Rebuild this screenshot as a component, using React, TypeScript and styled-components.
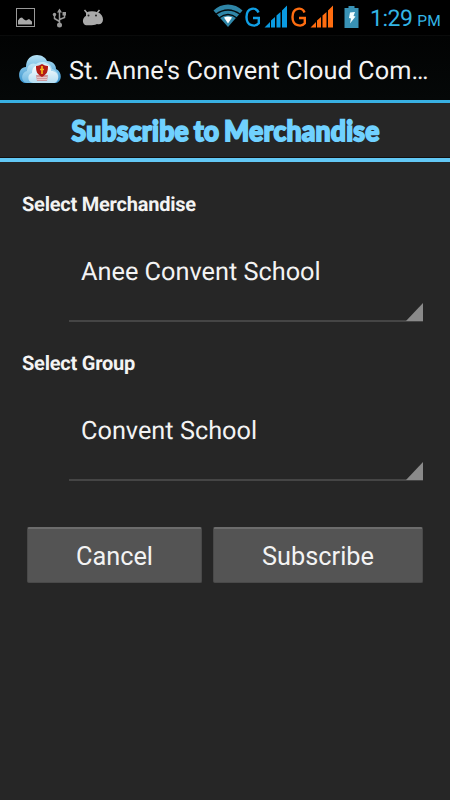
import React from "react";
import styled, { createGlobalStyle } from "styled-components";

const GlobalStyle = createGlobalStyle`
  * { box-sizing: border-box; }
  body { margin: 0; background: #262626; }
`;

const Screen = styled.div`
  width: 450px;
  height: 800px;
  display: flex;
  flex-direction: column;
  overflow: hidden;
  background: #262626;
  color: #f3f3f3;
  font-family: Roboto, "Liberation Sans", sans-serif;
  text-rendering: geometricPrecision;
`;

const StatusBar = styled.header`
  height: 36px;
  flex: none;
  display: flex;
  justify-content: space-between;
  background: #000;
  border-bottom: 1px solid #0a0b0b;
`;

const StatusIcons = styled.svg`
  display: block;
  flex: none;
`;

const StatusGroup = styled.div`
  display: flex;
`;

const Clock = styled.div`
  width: 80px;
  padding-top: 5px;
  color: #33b5e5;
  font-size: 23px;
  line-height: 27px;
  letter-spacing: -0.5px;
  white-space: nowrap;
`;

const Meridiem = styled.span`
  margin-left: 5px;
  font-size: 15.5px;
  letter-spacing: 0;
`;

const ActionBar = styled.div`
  height: 67px;
  flex: none;
  display: flex;
  align-items: flex-start;
  padding: 18px 0 0 18px;
  background: linear-gradient(#020303, #050808);
  border-bottom: 3px solid #38b0e2;
`;

const AppTitle = styled.h1`
  margin: 2px 0 0 7px;
  font-size: 25.3px;
  font-weight: 400;
  line-height: 32px;
  letter-spacing: 0.08px;
  white-space: nowrap;
`;

const Banner = styled.h2`
  height: 59px;
  flex: none;
  margin: 0;
  display: flex;
  justify-content: center;
  padding: 11px 0 0 1px;
  border-bottom: 4px solid #62c8f5;
  box-shadow: inset 0 -1px #111;
  color: #70d1ff;
  font-family: Lato, sans-serif;
  font-size: 28.5px;
  font-weight: 900;
  line-height: 34px;
  letter-spacing: 0.25px;
  word-spacing: -2px;
  white-space: nowrap;
`;

const BannerText = styled.span`
  transform: scaleX(0.93);
  -webkit-text-stroke: 1.8px #70d1ff;
`;

const Form = styled.main`
  display: flex;
  flex-direction: column;
  padding: 0 27px 0 22px;
`;

const Field = styled.section<{ $top: number }>`
  margin-top: ${(p) => p.$top}px;
`;

const Label = styled.div`
  height: 26px;
  font-size: 20px;
  font-weight: 700;
  line-height: 26px;
  letter-spacing: -0.23px;
  white-space: nowrap;
`;

const Spinner = styled.div`
  height: 105px;
  margin-left: 47px;
  display: flex;
  justify-content: space-between;
  align-items: flex-end;
  border-bottom: 2px solid #454545;
`;

const Value = styled.div`
  height: 63px;
  padding-left: 12px;
  font-size: 25.3px;
  line-height: 32px;
  white-space: nowrap;
`;

const Corner = styled.svg`
  display: block;
  margin-bottom: -1px;
`;

const Buttons = styled.div`
  display: grid;
  grid-template-columns: 175px 210px;
  gap: 11px;
  margin: 46px 0 0 5px;
`;

const Button = styled.button`
  height: 56px;
  padding: 3px 0 0;
  border: 1px solid #494949;
  border-top: 2px solid #6c6c6c;
  border-radius: 2px;
  background: #545454;
  color: #f3f3f3;
  font-family: inherit;
  font-size: 25.3px;
  line-height: 32px;
`;

const LeftIcons = () => (
  <StatusIcons width="110" height="35" viewBox="0 0 110 35">
    <rect x="16.5" y="8.500" width="18" height="18" fill="none" stroke="#999" />
    <path d="M18 24.500v-4l2-2.500 2-.5 2 2 2 1 3-1.500 3 2.500v3z" fill="#aaa" />
    <g stroke="#999" strokeWidth="1.500" fill="none">
      <path d="M59.500 25V10M59.500 21.500l-5-3V14M59.500 19.500l5-2V14" />
    </g>
    <path d="M57 12.500 59.500 8.500l2.500 4zM62.500 12h3.500v3.500h-3.500z" fill="#999" />
    <circle cx="54.500" cy="14.500" r="1.700" fill="#999" />
    <circle cx="59.500" cy="25" r="2.500" fill="#999" />
    <path d="M86 12.500q6-2.500 12 0c3 1 5 4 5 7 0 4-3 5.500-6 4.500-3 1.300-6 1.500-9 1.300-3.500.5-5.500-2.300-5-5.300.5-2 1.500-3.500 3-4z" fill="#aaa" />
    <path d="m87 13-2.500-3M97 13l2.500-3" stroke="#aaa" strokeWidth="1.500" />
    <circle cx="88.500" cy="15.500" r="1" fill="#222" />
    <circle cx="96" cy="15.500" r="1" fill="#222" />
  </StatusIcons>
);

const Bars = ({ x, color }: { x: number; color: string }) => (
  <path
    transform={`translate(${x} 0)`}
    fill={color}
    d="M0 27.500 5.500 22v5.500zM6.500 27.500v-7L10.500 17v10.500zM12 27.500v-12l4-3.500v15.500zM17.500 27.500V10.500L22.500 5.500V27.500z"
  />
);

const RadioIcons = () => (
  <StatusIcons width="160" height="35" viewBox="210 0 160 35">
    <path d="M213.500 10.500a20.500 20.500 0 0 1 29 0L228 27z" fill="#2f86a8" />
    <g fill="none" stroke="#050b0e" strokeWidth="1.300">
      <path d="M215.500 14.500q12.500-9 25 0M219 18q9-7 18 0" />
    </g>
    <path d="M224 17.500q4-2 8 0l-4 6z" fill="#fff" />
    <g fill="none" strokeWidth="2.400">
      <path d="M258.500 12.500C256.500 6.800 246.500 7 246.500 17S256 26.800 258.800 23.300v-5.300H253" stroke="#10a0e6" />
      <path d="M304.500 12.500C302.500 6.800 292.500 7 292.500 17S302 26.800 304.800 23.300v-5.300H299" stroke="#ff6d10" />
    </g>
    <Bars x={264.500} color="#0a9be2" />
    <Bars x={310.500} color="#ff6d10" />
    <path d="M344.500 8h4V6h6v2h4v20h-14z" fill="#3992b5" />
    <path d="m350 12.500 5-.5-1.500 4 2 .5-5.500 7 1-5-2-.5z" fill="#f4ffff" />
  </StatusIcons>
);

const CloudLogo = () => (
  <StatusIcons width="44" height="34" viewBox="18 54 44 34">
    <defs>
      <linearGradient id="cloudBack" x1="0" y1="0" x2="0" y2="1">
        <stop stopColor="#b5e2f5" />
        <stop offset="1" stopColor="#3793ce" />
      </linearGradient>
      <linearGradient id="cloudMiddle" x1="0" y1="0" x2="0" y2="1">
        <stop stopColor="#c9ebf9" />
        <stop offset="1" stopColor="#6db7e1" />
      </linearGradient>
      <linearGradient id="cloudFront" x1="0" y1="0" x2="0" y2="1">
        <stop stopColor="#ffffff" />
        <stop offset="1" stopColor="#b5def2" />
      </linearGradient>
    </defs>
    <path d="M25 83c-8-1-8-16 1-16 0-8 5-12 11-12 5 0 9 3 10 6 6 0 9 4 9 8 7 3 6 14-1 14z" fill="url(#cloudBack)" />
    <path d="M27 83c-7-1-6-11 0-12 0-6 5-9 9-7 5-4 15-2 16 5 9 2 8 13 1 14z" fill="url(#cloudMiddle)" />
    <path d="M33 83c-6-1-6-9-1-10 0-6 4-9 8-7 5-3 11-1 11 5 9 0 9 11 3 12z" fill="url(#cloudFront)" />
    <path d="M36 75h12l-1 6H37z" fill="#d0989c" />
    <path d="M37 77.500h10M37 79.500h10" stroke="#efdadd" strokeWidth=".7" />
    <path d="M36 66q3 0 6-2 3 2 6 2c0 6-1 8-6 11-5-3-6-5-6-11z" fill="#b31c16" />
    <path d="M42 66v8M40 69.500h4" stroke="#f4b51c" strokeWidth="1.700" />
  </StatusIcons>
);

const SpinnerCorner = () => (
  <Corner width="17" height="18" viewBox="0 0 17 18">
    <path d="M17 0v18H0z" fill="#8a8a8a" />
  </Corner>
);

type Choice = { label: string; value: string; top: number };

const choices: Choice[] = [
  { label: "Select Merchandise", value: "Anee Convent School", top: 29 },
  { label: "Select Group", value: "Convent School", top: 28 },
];

export default function App() {
  return (
    <>
      <GlobalStyle />
      <Screen>
        <StatusBar>
          <LeftIcons />
          <StatusGroup>
            <RadioIcons />
            <Clock>
              1:29<Meridiem>PM</Meridiem>
            </Clock>
          </StatusGroup>
        </StatusBar>
        <ActionBar>
          <CloudLogo />
          <AppTitle>St. Anne's Convent Cloud Com…</AppTitle>
        </ActionBar>
        <Banner>
          <BannerText>Subscribe to Merchandise</BannerText>
        </Banner>
        <Form>
          {choices.map((c) => (
            <Field key={c.label} $top={c.top}>
              <Label>{c.label}</Label>
              <Spinner>
                <Value>{c.value}</Value>
                <SpinnerCorner />
              </Spinner>
            </Field>
          ))}
          <Buttons>
            <Button>Cancel</Button>
            <Button>Subscribe</Button>
          </Buttons>
        </Form>
      </Screen>
    </>
  );
}
